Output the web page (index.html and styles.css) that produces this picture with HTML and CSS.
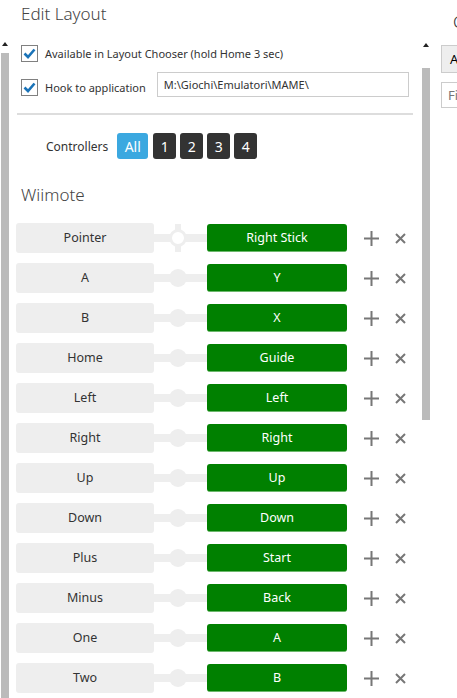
FILE: index.html
```html
<!DOCTYPE html>
<html lang="en">
<head>
    <meta charset="UTF-8" />
    <title>Edit Layout</title>
    <link rel="stylesheet" href="styles.css">
</head>
<body>
    <div class="page">
        <div class="editor">
            <h2 class="title">Edit Layout</h2>
            <div class="scroll-area">
                <div class="vbar left">
                    <span class="arrow"></span>
                    <span class="thumb"></span>
                </div>
                <div class="content">
                    <label class="check-row">
                        <span class="checkbox"><svg width="13" height="11" viewBox="0 0 13 11"><path d="M1.5 5.5 L5 9 L11.5 1.5" fill="none" stroke="#1a73b8" stroke-width="2.6"/></svg></span>
                        Available in Layout Chooser (hold Home 3 sec)
                    </label>
                    <div class="check-row hook">
                        <label class="check-row inner">
                            <span class="checkbox"><svg width="13" height="11" viewBox="0 0 13 11"><path d="M1.5 5.5 L5 9 L11.5 1.5" fill="none" stroke="#1a73b8" stroke-width="2.6"/></svg></span>
                            Hook to application
                        </label>
                        <input class="path" type="text" value="M:\Giochi\Emulatori\MAME\" />
                    </div>
                    <div class="separator"></div>

                    <div class="controllers">
                        <span class="ctl-label">Controllers</span>
                        <button class="ctl active">All</button>
                        <button class="ctl">1</button>
                        <button class="ctl">2</button>
                        <button class="ctl">3</button>
                        <button class="ctl">4</button>
                    </div>

                    <h3 class="section">Wiimote</h3>
                    <div id="mappings"></div>
                </div>
                <div class="vbar right">
                    <span class="arrow"></span>
                    <span class="thumb"></span>
                </div>
            </div>
        </div>
        <div class="side">
            <div class="side-title">C</div>
            <button class="side-btn">A</button>
            <input class="side-input" type="text" placeholder="Fi" />
        </div>
    </div>
    <script>
        const mappings = [
            ['Pointer', 'Right Stick'],
            ['A', 'Y'],
            ['B', 'X'],
            ['Home', 'Guide'],
            ['Left', 'Left'],
            ['Right', 'Right'],
            ['Up', 'Up'],
            ['Down', 'Down'],
            ['Plus', 'Start'],
            ['Minus', 'Back'],
            ['One', 'A'],
            ['Two', 'B']
        ];
        const list = document.getElementById('mappings');

        mappings.forEach(([from, to], index) => {
            const row = document.createElement('div');
            row.className = 'map-row';
            const knob = index === 0 ? 'knob ring' : 'knob';
            row.innerHTML = `
                <div class="source">${from}</div>
                <div class="link"><span class="${knob}"></span></div>
                <div class="target">${to}</div>
                <span class="icon-btn"><svg width="15" height="15" viewBox="0 0 15 15"><path d="M7.5 0 V15 M0 7.5 H15" stroke="#777" stroke-width="2"/></svg></span>
                <span class="icon-btn"><svg width="11" height="11" viewBox="0 0 11 11"><path d="M1 1 L10 10 M10 1 L1 10" stroke="#777" stroke-width="2"/></svg></span>
            `;
            list.appendChild(row);
        });
    </script>
</body>
</html>
```

FILE: styles.css
```css
body {
    margin: 0;
    font-family: "Noto Sans", "Open Sans", sans-serif;
    color: #333;
    background: #fff;
}

.page {
    display: flex;
    height: 698px;
    overflow: hidden;
}

.editor {
    width: 435px;
    flex-shrink: 0;
    display: flex;
    flex-direction: column;
}

.title {
    margin: 0;
    height: 38px;
    flex-shrink: 0;
    padding: 2px 0 0 21px;
    box-sizing: border-box;
    font-size: 17px;
    font-weight: 300;
    color: #444;
}

.scroll-area {
    display: flex;
    flex: 1;
    min-height: 0;
    overflow: hidden;
}

.vbar {
    width: 10px;
    flex-shrink: 0;
    display: flex;
    flex-direction: column;
    align-items: center;
}

.vbar .arrow {
    width: 0;
    height: 0;
    margin-top: 4px;
    border-left: 3px solid transparent;
    border-right: 3px solid transparent;
    border-bottom: 4px solid #222;
}

.vbar .thumb {
    width: 8px;
    background: #bbb;
}

.vbar.left .thumb {
    margin-top: 7px;
    flex: 1;
}

.vbar.right {
    margin-left: 1px;
}

.vbar.right .arrow {
    margin-top: 5px;
}

.vbar.right .thumb {
    margin-top: 21px;
    height: 352px;
}

.content {
    width: 410px;
    flex-shrink: 0;
}

.check-row {
    display: flex;
    align-items: center;
    font-size: 11px;
    padding-left: 11px;
    height: 17px;
    margin-top: 7px;
}

.checkbox {
    width: 15px;
    height: 15px;
    border: 1px solid #808080;
    background: #fff;
    margin-right: 7px;
    display: flex;
    align-items: center;
    justify-content: center;
}

.check-row.hook {
    height: 25px;
    margin-top: 10px;
    padding-left: 0;
    align-items: flex-start;
}

.check-row.inner {
    margin-top: 7px;
    padding-left: 11px;
}

.path {
    margin-left: 11px;
    width: 252px;
    height: 25px;
    box-sizing: border-box;
    border: 1px solid #ccc;
    padding: 0 6px;
    font-family: inherit;
    font-size: 11px;
    color: #333;
}

.separator {
    margin: 16px 7px 0 7px;
    height: 2px;
    background: #ddd;
    width: 396px;
}

.controllers {
    display: flex;
    align-items: center;
    margin-top: 18px;
    padding-left: 36px;
    height: 26px;
}

.ctl-label {
    font-size: 12px;
    margin-right: 9px;
}

.ctl {
    height: 26px;
    min-width: 23px;
    margin-right: 4px;
    border: none;
    border-radius: 3px;
    background: #333;
    color: #fff;
    font-family: inherit;
    font-size: 14px;
    padding: 0;
}

.ctl.active {
    width: 31px;
    background: #3ba8e0;
    margin-right: 5px;
}

.section {
    margin: 24px 0 0 11px;
    height: 40px;
    font-size: 17px;
    font-weight: 300;
    color: #444;
}

.map-row {
    display: flex;
    align-items: center;
    height: 30px;
    margin-bottom: 10px;
    padding-left: 6px;
}

.source {
    width: 138px;
    height: 30px;
    line-height: 30px;
    background: #eee;
    border-radius: 3px;
    text-align: center;
    font-size: 12.5px;
}

.link {
    width: 53px;
    height: 30px;
    display: flex;
    align-items: center;
    justify-content: center;
    background: linear-gradient(#eee, #eee) center / 100% 8px no-repeat;
}

.knob {
    width: 18px;
    height: 18px;
    border-radius: 50%;
    background: #eee;
    margin-right: 5px;
}

.knob.ring {
    box-sizing: border-box;
    border: 3px solid #eee;
    background: #fff;
    position: relative;
}

.knob.ring::before,
.knob.ring::after {
    content: "";
    position: absolute;
    left: 3px;
    width: 6px;
    height: 6px;
    background: #eee;
}

.knob.ring::before {
    top: -8px;
}

.knob.ring::after {
    bottom: -8px;
}

.target {
    width: 140px;
    height: 28px;
    line-height: 28px;
    background: #008000;
    border-radius: 3px;
    color: #fff;
    text-align: center;
    font-size: 12.5px;
    border-bottom: 1px solid #6cb86c;
    box-sizing: border-box;
}

.icon-btn {
    display: flex;
    align-items: center;
    justify-content: center;
    width: 15px;
    margin-left: 17px;
}

.icon-btn + .icon-btn {
    margin-left: 16px;
    width: 11px;
}

.side {
    flex: 1;
    padding-left: 6px;
    display: flex;
    flex-direction: column;
    align-items: flex-start;
}

.side-title {
    font-size: 17px;
    font-weight: 300;
    margin-top: 10px;
    height: 35px;
    white-space: nowrap;
    padding-left: 12px;
}

.side-btn {
    width: 60px;
    height: 28px;
    border: 1px solid #ccc;
    background: #eee;
    font-family: inherit;
    font-size: 13px;
    text-align: left;
    padding-left: 8px;
}

.side-input {
    margin-top: 9px;
    width: 60px;
    height: 26px;
    box-sizing: border-box;
    border: 1px solid #ccc;
    font-family: inherit;
    font-size: 13px;
    padding-left: 6px;
}
```
